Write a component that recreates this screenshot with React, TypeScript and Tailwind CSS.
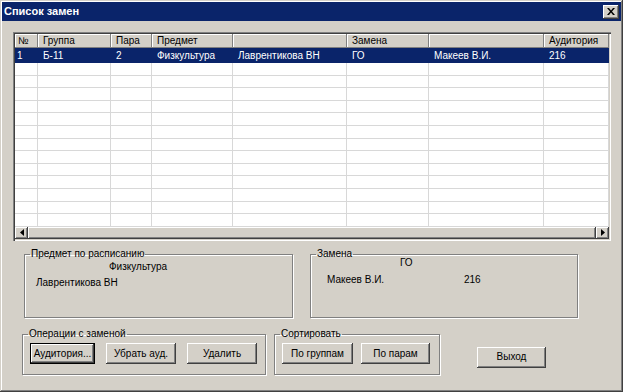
import React from 'react'

const face = 'bg-[#d4d0c8]'
const raised =
  'shadow-[inset_-1px_-1px_#404040,inset_1px_1px_#ffffff,inset_-2px_-2px_#808080,inset_2px_2px_#d4d0c8]'

const cols = [
  { w: 23, title: '№', value: '1' },
  { w: 73, title: 'Группа', value: 'Б-11' },
  { w: 41, title: 'Пара', value: '2' },
  { w: 81, title: 'Предмет', value: 'Физкультура' },
  { w: 114, title: '', value: 'Лаврентикова ВН' },
  { w: 82, title: 'Замена', value: 'ГО' },
  { w: 115, title: '', value: 'Макеев В.И.' },
  { w: 65, title: 'Аудитория', value: '216' },
]

const emptyRows = Array.from({ length: 13 })

function Button({ label, wide = 69, isDefault = false }: { label: string; wide?: number; isDefault?: boolean }) {
  return (
    <button
      style={{ width: wide }}
      className={`h-[21px] ${face} text-[10px] leading-none text-black ${
        isDefault
          ? 'border border-black shadow-[inset_-1px_-1px_#404040,inset_1px_1px_#ffffff,inset_-2px_-2px_#808080]'
          : raised
      }`}
    >
      {label}
    </button>
  )
}

function Arrow({ dir }: { dir: 'left' | 'right' }) {
  return (
    <div className={`flex h-full w-[13px] items-center justify-center ${face} ${raised}`}>
      <svg width="4" height="7" viewBox="0 0 4 7">
        {dir === 'left' ? <path d="M4 0v7L0 3.5z" fill="#000" /> : <path d="M0 0v7l4-3.5z" fill="#000" />}
      </svg>
    </div>
  )
}

function Grid() {
  return (
    <div className="flex h-[209px] w-[598px] flex-col bg-white shadow-[inset_1px_1px_#808080,inset_2px_2px_#404040,inset_-1px_-1px_#ffffff,inset_-2px_-2px_#d4d0c8] p-[2px]">
      {/* header */}
      <div className="flex h-[14px] shrink-0">
        {cols.map((c, i) => (
          <div
            key={i}
            style={{ width: c.w }}
            className={`${face} shrink-0 overflow-hidden whitespace-nowrap pl-[5px] text-[10px] leading-[14px] text-black shadow-[inset_-1px_-1px_#808080,inset_1px_1px_#ffffff] first:pl-[3px]`}
          >
            {c.title}
          </div>
        ))}
      </div>
      {/* selected row */}
      <div className="flex h-[15px] shrink-0 bg-[#0a246a]">
        {cols.map((c, i) => (
          <div
            key={i}
            style={{ width: c.w }}
            className="shrink-0 overflow-hidden whitespace-nowrap pl-[5px] text-[10px] leading-[15px] text-white first:pl-[2px]"
          >
            {c.value}
          </div>
        ))}
      </div>
      {emptyRows.map((_, r) => (
        <div key={r} className="flex h-[12.6px] shrink-0">
          {cols.map((c, i) => (
            <div
              key={i}
              style={{ width: c.w }}
              className="shrink-0 border-r border-b border-[#d8d8d8]"
            />
          ))}
        </div>
      ))}
      {/* horizontal scrollbar */}
      <div className="flex h-[12px] shrink-0 bg-[#e6e3de]">
        <Arrow dir="left" />
        <div className={`h-full flex-1 ${face} ${raised}`} />
        <Arrow dir="right" />
      </div>
    </div>
  )
}

function Group({
  title,
  className,
  children,
}: {
  title: string
  className: string
  children: React.ReactNode
}) {
  return (
    <fieldset
      className={`relative border border-[#808080] shadow-[1px_1px_0_#ffffff,inset_1px_1px_0_#ffffff] ${className}`}
    >
      <legend className="ml-[5px] px-[1px] text-[10px] leading-[12px] text-black">{title}</legend>
      {children}
    </fieldset>
  )
}

export default function App() {
  return (
    <div
      className={`flex h-[392px] w-[623px] flex-col ${face} p-[2px] font-['Liberation_Sans',Arial,sans-serif] shadow-[inset_-1px_-1px_#404040,inset_1px_1px_#d4d0c8,inset_-2px_-2px_#808080,inset_2px_2px_#ffffff]`}
    >
      {/* title bar */}
      <div className="flex h-[19px] shrink-0 items-center justify-between bg-[#0a246a] pl-[2px] pr-[2px]">
        <span className="text-[11px] font-bold text-white">Список замен</span>
        <button
          className={`flex h-[14px] w-[16px] items-center justify-center ${face} ${raised}`}
          aria-label="Закрыть"
        >
          <svg width="8" height="7" viewBox="0 0 8 7">
            <path d="M0 0h2l2 2.5L6 0h2L5 3.5 8 7H6L4 4.5 2 7H0l3-3.5z" fill="#000" />
          </svg>
        </button>
      </div>

      <div className="flex flex-1 flex-col pl-[11px] pt-[11px]">
        <Grid />

        <div className="mt-[7px] flex gap-[17px] pl-[11px]">
          <Group title="Предмет по расписанию" className="h-[70px] w-[269px]">
            <div className="text-[10px] leading-[12px] text-black">
              <div className="pl-[84px] pt-[1px]">Физкультура</div>
              <div className="pl-[11px] pt-[4px]">Лаврентикова ВН</div>
            </div>
          </Group>
          <Group title="Замена" className="h-[70px] w-[268px]">
            <div className="text-[10px] leading-[12px] text-black">
              <div className="-mt-[3px] pl-[89px]">ГО</div>
              <div className="flex pl-[16px] pt-[5px]">
                <span className="w-[137px]">Макеев В.И.</span>
                <span>216</span>
              </div>
            </div>
          </Group>
        </div>

        <div className="mt-[10px] flex items-start pl-[9px]">
          <Group title="Операции с заменой" className="h-[47px] w-[244px]">
            <div className="flex gap-[11px] pl-[7px] pt-[3px]">
              <Button label="Аудитория..." wide={65} isDefault />
              <Button label="Убрать ауд." wide={70} />
              <Button label="Удалить" wide={70} />
            </div>
          </Group>
          <Group title="Сортировать" className="ml-[8px] h-[47px] w-[166px]">
            <div className="flex gap-[8px] pl-[7px] pt-[3px]">
              <Button label="По группам" wide={71} />
              <Button label="По парам" wide={69} />
            </div>
          </Group>
          <div className="ml-[37px] pt-[15px]">
            <Button label="Выход" wide={69} />
          </div>
        </div>
      </div>
    </div>
  )
}
